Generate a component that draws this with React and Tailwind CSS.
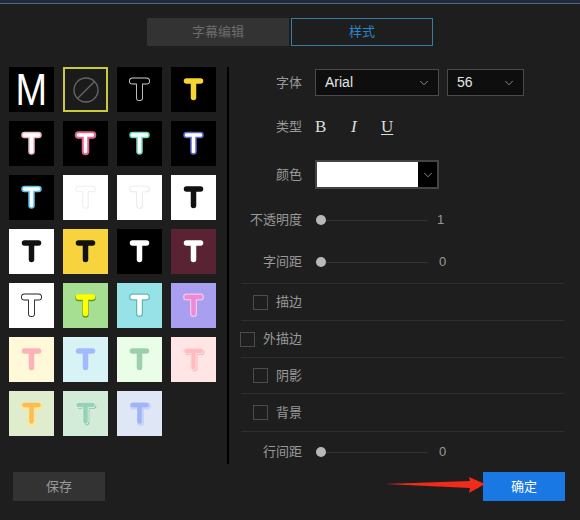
import { ChevronDown } from "lucide-react";

const cjk = "font-['Liberation_Sans','Noto_Sans_CJK_SC',sans-serif]";

// each layer: [stroke colour, stroke width, dx, dy]
const tiles = [
  { bg: "bg-black", layers: [["#d0d0d0", 7], ["#000000", 5.2]] },
  { bg: "bg-black", layers: [["#f6d433", 5.5]] },
  { bg: "bg-black", layers: [["#f0b8c4", 6.5], ["#ffffff", 3.5]] },
  { bg: "bg-black", layers: [["#e5638f", 7.5], ["#ffffff", 3.5]] },
  { bg: "bg-black", layers: [["#6fd8bc", 6.5], ["#ffffff", 3.5]] },
  { bg: "bg-black", layers: [["#5f6ad8", 6.5], ["#ffffff", 3.5]] },
  { bg: "bg-black", layers: [["#5cc0ec", 6.5], ["#ffffff", 3.5]] },
  { bg: "bg-white", layers: [["#eeeeee", 6.5], ["#ffffff", 4.5]] },
  { bg: "bg-white", layers: [["#e6e6e6", 6.5], ["#ffffff", 4.8]] },
  { bg: "bg-white", layers: [["#111111", 5.5]] },
  { bg: "bg-white", layers: [["#111111", 5.5]] },
  { bg: "bg-[#f7d33e]", layers: [["#111111", 5.5]] },
  { bg: "bg-black", layers: [["#ffffff", 5.5]] },
  { bg: "bg-[#5a2334]", layers: [["#ffffff", 5.5]] },
  { bg: "bg-white", layers: [["#222222", 7], ["#ffffff", 5.2]] },
  { bg: "bg-[#a6df92]", layers: [["#5a9a30", 6.5, 0, 1], ["#ffff00", 5.5]] },
  { bg: "bg-[#96e2e6]", layers: [["#5fb8b8", 7], ["#ffffff", 4.5]] },
  { bg: "bg-[#a99ff0]", layers: [["#f0c8ec", 7], ["#ee88d8", 4.5]] },
  { bg: "bg-[#fff9da]", layers: [["#ffb1b8", 5.5]] },
  { bg: "bg-[#d8f3f6]", layers: [["#a3baff", 5.5]] },
  { bg: "bg-[#eafde6]", layers: [["#9ccfae", 5.5]] },
  { bg: "bg-[#ffe5e6]", layers: [["#f6b4b8", 6, 1, 1], ["#ffd9d9", 6.5], ["#ffbcbe", 4]] },
  { bg: "bg-[#dfeccd]", layers: [["#ffe78c", 7.5, 0, 1], ["#f7bd5c", 4.5]] },
  { bg: "bg-[#d2ecd9]", layers: [["#6eb593", 5.5, 1, 1], ["#d9f2e2", 6.5], ["#98d2b6", 4.5]] },
  { bg: "bg-[#dfe6f6]", layers: [["#c6d3fb", 7, 1, 1], ["#a2b4f8", 4.5]] },
];

function TGlyph({ layers }) {
  return (
    <svg viewBox="0 0 45 45" className="h-[45px] w-[45px]">
      {layers.map(([color, width, dx = 0, dy = 0], i) => (
        <path
          key={i}
          d="M15.5 14H29.5M22.5 14V30.5"
          transform={`translate(${dx} ${dy})`}
          fill="none"
          stroke={color}
          strokeWidth={width}
          strokeLinecap="round"
        />
      ))}
    </svg>
  );
}

function Chevron() {
  return <ChevronDown className="h-[14px] w-[14px] text-[#9a9a9a]" strokeWidth={1.5} />;
}

function Select({ value, className }) {
  return (
    <div className={`flex h-[27px] items-center justify-between border border-[#4a4a4a] bg-[#0e0e0e] pl-[9px] pr-[7px] font-['Liberation_Sans',sans-serif] text-[14px] text-[#e6e6e6] ${className}`}>
      <span>{value}</span>
      <Chevron />
    </div>
  );
}

function Label({ children }) {
  return <span className="whitespace-nowrap text-[13px] text-[#999999]">{children}</span>;
}

function SliderRow({ label, value, className, valueClass }) {
  return (
    <div className={`flex h-[30px] items-center ${className}`}>
      <div className="flex w-[61px] justify-end">
        <Label>{label}</Label>
      </div>
      <div className="ml-[14px] flex w-[112px] items-center">
        <div className="h-[10px] w-[10px] shrink-0 rounded-full bg-[#b8b8b8]" />
        <div className="h-px flex-1 bg-[#333333]" />
      </div>
      <span className={`font-['Liberation_Sans',sans-serif] text-[13px] text-[#999999] ${valueClass}`}>{value}</span>
    </div>
  );
}

function CheckRow({ label, height }) {
  return (
    <div className={`flex items-center ${height}`}>
      <div className="flex w-[61px] items-center justify-end gap-[8px]">
        <div className="h-[15px] w-[15px] shrink-0 border border-[#4c4c4c]" />
        <Label>{label}</Label>
      </div>
    </div>
  );
}

export default function App() {
  return (
    <div className={`relative flex h-[520px] w-[580px] flex-col overflow-hidden bg-[#1e1e1e] ${cjk}`}>
      <div className="h-[4px] shrink-0 border-b border-[#3f6d96] bg-[#232a33]" />

      <div className="mt-[14px] flex justify-center gap-[2px]">
        <div className="flex h-[28px] w-[142px] items-center justify-center bg-[#333333] text-[13px] text-[#6c6c6c]">
          字幕编辑
        </div>
        <div className="flex h-[28px] w-[142px] items-center justify-center border border-[#3a7ba8] text-[13px] text-[#2a86c9]">
          样式
        </div>
      </div>

      <div className="mt-[21px] flex h-[397px] items-start pl-[9px]">
        <div className="grid grid-cols-[repeat(4,45px)] auto-rows-[45px] gap-[9px]">
          <div className="flex items-center justify-center bg-black">
            <span className="origin-center scale-x-[0.86] font-['Liberation_Sans',sans-serif] text-[44px] font-normal leading-[45px] text-white">M</span>
          </div>
          <div className="flex items-center justify-center border-2 border-[#c9c93c] bg-[#1b1b1b]">
            <svg viewBox="0 0 26 26" className="h-[26px] w-[26px]" fill="none" stroke="#666666" strokeWidth="1.3">
              <circle cx="13" cy="13" r="12" />
              <path d="M4.5 21.5L21.5 4.5" />
            </svg>
          </div>
          {tiles.map((t, i) => (
            <div key={i} className={t.bg}>
              <TGlyph layers={t.layers} />
            </div>
          ))}
        </div>

        <div className="ml-[11px] h-[397px] w-[2px] bg-black" />

        <div className="ml-[12px] flex w-[323px] flex-col">
          <div className="mt-[2px] flex items-center">
            <div className="flex w-[61px] justify-end">
              <Label>字体</Label>
            </div>
            <Select value="Arial" className="ml-[13px] w-[124px]" />
            <Select value="56" className="ml-[8px] w-[77px]" />
          </div>

          <div className="mt-[16px] flex h-[30px] items-center">
            <div className="flex w-[61px] justify-end">
              <Label>类型</Label>
            </div>
            <div className="ml-[13px] flex items-center font-['Liberation_Serif',serif] text-[17px] text-[#dddddd]">
              <span className="w-[35px]">B</span>
              <span className="w-[31px] pl-[1px] italic">I</span>
              <span className="underline underline-offset-2">U</span>
            </div>
          </div>

          <div className="mt-[18px] flex items-center">
            <div className="flex w-[61px] justify-end">
              <Label>颜色</Label>
            </div>
            <div className="ml-[13px] flex h-[29px] w-[124px] border-2 border-[#444444] bg-black">
              <div className="w-[101px] bg-white" />
              <div className="flex flex-1 items-center justify-center">
                <Chevron />
              </div>
            </div>
          </div>

          <SliderRow label="不透明度" value="1" className="mt-[16px]" valueClass="ml-[9px]" />
          <SliderRow label="字间距" value="0" className="mt-[12px]" valueClass="ml-[11px]" />

          <div className="mt-[6px] divide-y divide-[#2e2e2e] border-y border-[#2e2e2e]">
            <CheckRow label="描边" height="h-[37px]" />
            <CheckRow label="外描边" height="h-[37px]" />
            <CheckRow label="阴影" height="h-[36px]" />
            <CheckRow label="背景" height="h-[37px]" />
          </div>

          <SliderRow label="行间距" value="0" className="mt-[5px]" valueClass="ml-[11px]" />
        </div>
      </div>

      <div className="mt-[8px] flex justify-between pl-[13px] pr-[15px]">
        <button className="h-[29px] w-[92px] bg-[#333333] text-[13px] text-[#999999]">保存</button>
        <button className="h-[29px] w-[82px] bg-[#1a78e4] text-[13px] text-white">确定</button>
      </div>

      <svg className="absolute left-[384px] top-[475px] h-[20px] w-[102px]" viewBox="0 0 102 20">
        <polygon points="1,9 86,6 85,2 101,9 85,18 86,13" fill="#f22a1c" />
      </svg>
    </div>
  );
}
